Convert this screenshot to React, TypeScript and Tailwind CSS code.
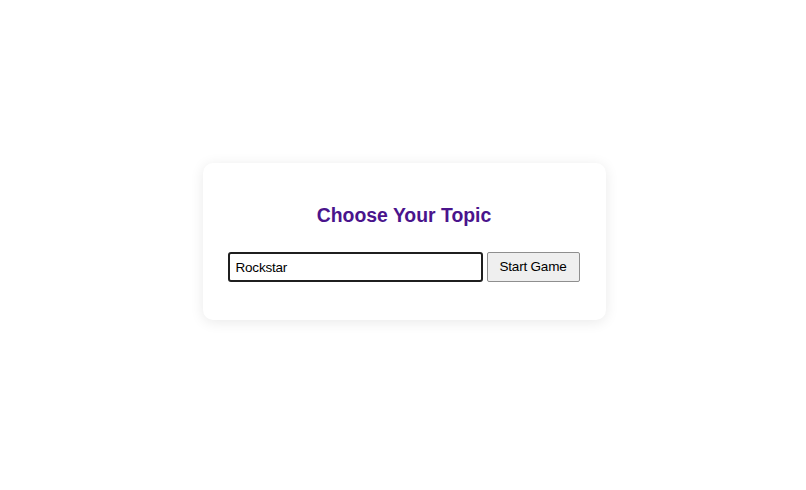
import React, { useState } from 'react';

function App() {
  const [topic, setTopic] = useState('Rockstar');

  return (
    <div
      className="min-h-screen w-full flex items-center justify-center bg-white pb-[7px] pl-[2px]"
      style={{ fontFamily: '"Liberation Sans", Arial, sans-serif' }}
    >
      {/* card */}
      <div className="w-[403px] h-[157px] bg-white rounded-[10px] shadow-[0_2px_14px_rgba(0,0,0,0.09)] px-[25px] pt-[38px] flex flex-col items-center">
        <h2 className="text-[19.4px] leading-[28px] font-bold text-[#4a148c]">Choose Your Topic</h2>
        <div className="mt-[23px] flex items-center gap-[4px] w-full">
          <input
            value={topic}
            onChange={(e) => setTopic(e.target.value)}
            className="w-[255px] h-[30px] border-2 border-[#1f1f1f] rounded-[3px] px-[6px] text-[13.5px] tracking-[-0.2px] text-black outline-none bg-white"
          />
          <button className="w-[93px] h-[30px] bg-[#efefef] border border-[#8f8f8f] rounded-[2px] text-[13.5px] tracking-[-0.2px] text-black">
            Start Game
          </button>
        </div>
      </div>
    </div>
  );
}

export default App;
